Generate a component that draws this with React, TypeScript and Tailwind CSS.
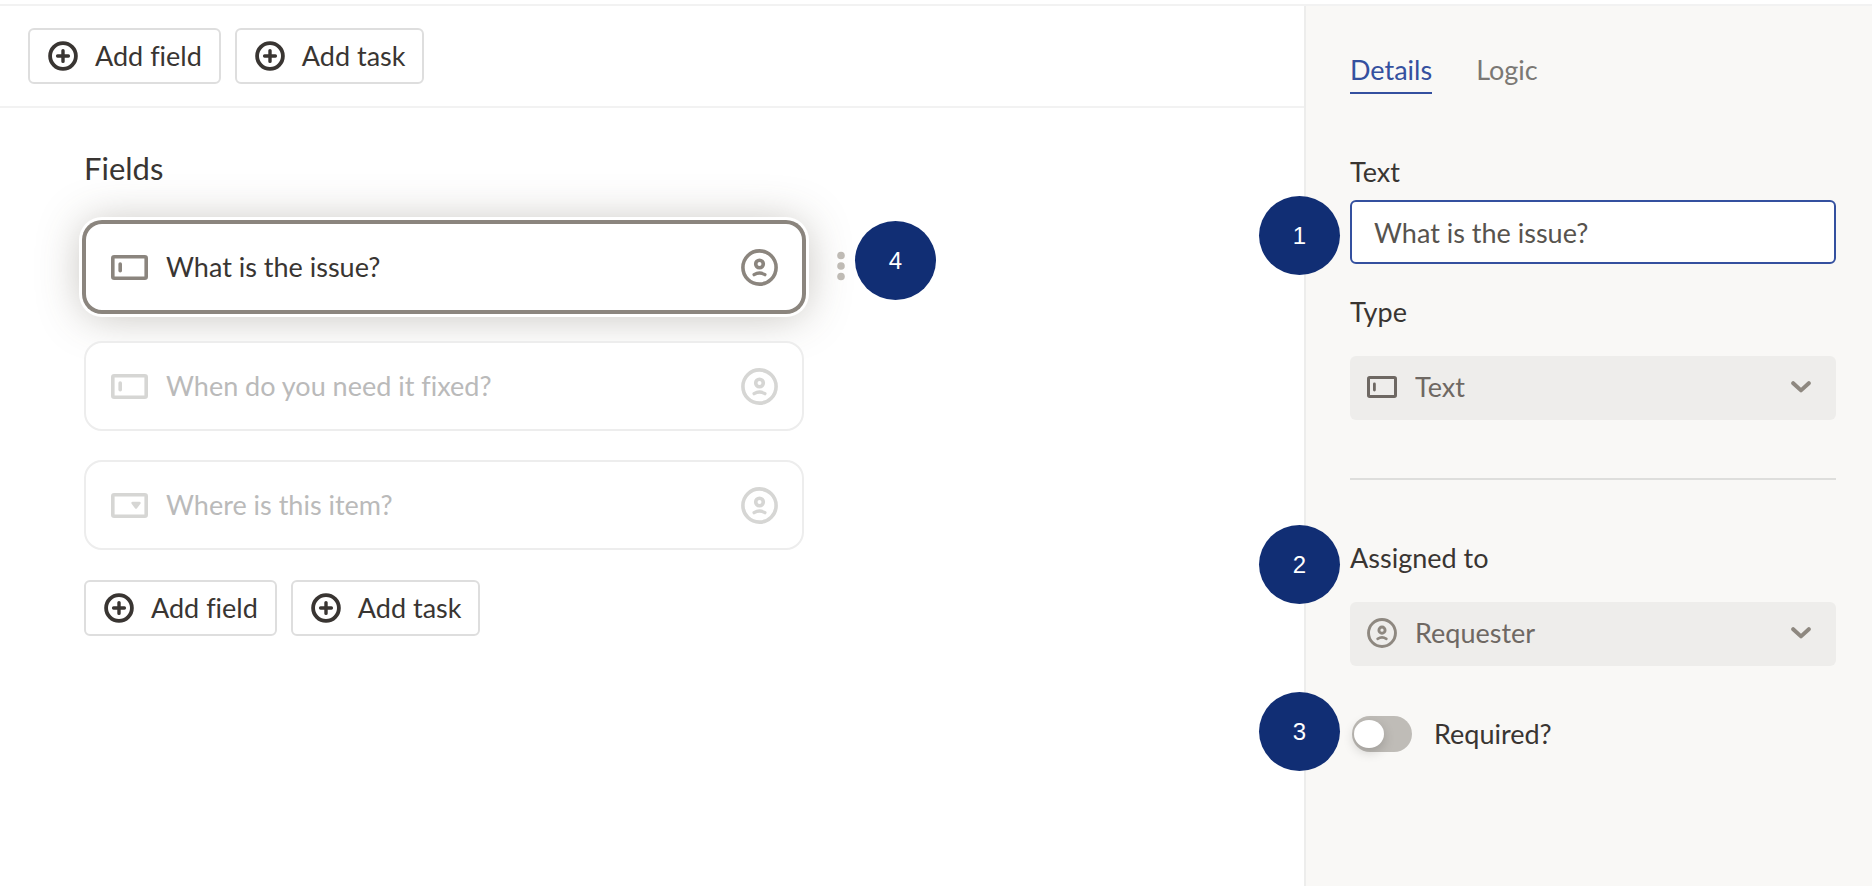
import { useState } from "react";
import type { ReactNode } from "react";

type IconProps = { className?: string };

function PlusCircleIcon({ className }: IconProps) {
  return (
    <svg viewBox="0 0 30 30" className={className} fill="none" stroke="currentColor" strokeLinecap="round" aria-hidden="true">
      <circle cx="15" cy="15" r="12.9" strokeWidth="3.8" />
      <path d="M15 9.6v10.8M9.6 15h10.8" strokeWidth="3.4" />
    </svg>
  );
}

function TextFieldIcon({ className }: IconProps) {
  return (
    <svg viewBox="0 0 37 25" className={className} fill="none" stroke="currentColor" aria-hidden="true">
      <rect x="1.8" y="1.8" width="33.4" height="21.4" rx="1.4" strokeWidth="3.6" />
      <path d="M9.2 9v6.8" strokeWidth="3.6" strokeLinecap="round" />
    </svg>
  );
}

function CompactTextFieldIcon({ className }: IconProps) {
  return (
    <svg viewBox="0 0 30 22" className={className} fill="none" stroke="currentColor" aria-hidden="true">
      <rect x="1.5" y="1.5" width="27" height="19" rx="1.2" strokeWidth="3" />
      <path d="M7.4 8v6" strokeWidth="2.8" strokeLinecap="round" />
    </svg>
  );
}

function DropdownFieldIcon({ className }: IconProps) {
  return (
    <svg viewBox="0 0 37 25" className={className} fill="none" stroke="currentColor" aria-hidden="true">
      <rect x="1.8" y="1.8" width="33.4" height="21.4" rx="1.4" strokeWidth="3.6" />
      <path d="M21.6 10h6.8L25 14.4z" fill="currentColor" strokeWidth="2.6" strokeLinejoin="round" />
    </svg>
  );
}

function PersonIcon({ className }: IconProps) {
  return (
    <svg viewBox="0 0 37 37" className={className} fill="none" stroke="currentColor" strokeLinecap="round" aria-hidden="true">
      <circle cx="18.5" cy="18.5" r="16.6" strokeWidth="3.6" />
      <circle cx="18.5" cy="15" r="3.8" strokeWidth="3.6" />
      <path d="M13.1 25.7Q18.5 22.3 23.9 25.7" strokeWidth="3.3" />
    </svg>
  );
}

function ChevronIcon({ className }: IconProps) {
  return (
    <svg viewBox="0 0 20 12" className={className} fill="none" stroke="currentColor" strokeLinecap="round" strokeLinejoin="round" aria-hidden="true">
      <path d="M2.2 2.2 10 9.4l7.8-7.2" strokeWidth="4" />
    </svg>
  );
}

function KebabIcon({ className }: IconProps) {
  return (
    <svg viewBox="0 0 8 30" className={className} fill="currentColor" aria-hidden="true">
      <circle cx="4" cy="4.5" r="3.8" />
      <circle cx="4" cy="15" r="3.8" />
      <circle cx="4" cy="25.5" r="3.8" />
    </svg>
  );
}

function AddButton({ label }: { label: string }) {
  return (
    <button
      type="button"
      className="flex h-14 items-center gap-[17px] rounded-md border-2 border-[#dedede] bg-white pr-[17px] pl-[18px] text-[#393532]"
    >
      <PlusCircleIcon className="size-[30px]" />
      {label}
    </button>
  );
}

function AddButtons() {
  return (
    <div className="flex gap-3.5">
      <AddButton label="Add field" />
      <AddButton label="Add task" />
    </div>
  );
}

function Badge({ n, className }: { n: number; className: string }) {
  return (
    <span
      className={`absolute flex h-[79px] w-[81px] items-center justify-center rounded-[50%] bg-[#112e74] font-['Liberation_Sans',sans-serif] text-2xl text-white ${className}`}
    >
      {n}
    </span>
  );
}

const fields = [
  { label: "What is the issue?", Icon: TextFieldIcon },
  { label: "When do you need it fixed?", Icon: TextFieldIcon },
  { label: "Where is this item?", Icon: DropdownFieldIcon },
];

function FieldCard({ label, Icon, active }: { label: string; Icon: (p: IconProps) => ReactNode; active: boolean }) {
  const look = active
    ? "border-[#8b857e] text-[#393532] shadow-[0_0_0_2px_#8b857e,0_0_0_5px_#fff,0_2px_44px_2px_rgba(80,70,55,0.34)]"
    : "border-[#ededed] text-[#bababa]";
  const iconColor = active ? "text-[#8b857e]" : "text-[#d6d6d4]";
  return (
    <li className={`relative rounded-[18px] border-2 bg-white ${look}`}>
      <button type="button" className="flex h-[86px] w-full items-center gap-[18px] pr-6 pl-[25px] text-left">
        <Icon className={`h-[25px] w-[37px] ${iconColor}`} />
        <span className="flex-1">{label}</span>
        <PersonIcon className={`size-[37px] ${iconColor}`} />
      </button>
      {active && (
        <div className="absolute top-0 left-full flex h-[84px] items-center pl-[35px] text-[#bfbbb5]">
          <button type="button" aria-label="Field options">
            <KebabIcon className="h-[30px] w-2" />
          </button>
          <Badge n={4} className="-top-[3px] left-[53px]" />
        </div>
      )}
    </li>
  );
}

function DisabledSelect({ id, value, icon }: { id: string; value: string; icon: ReactNode }) {
  return (
    <div className="grid h-16 items-center">
      <select
        id={id}
        disabled
        className="col-start-1 row-start-1 h-full w-full appearance-none rounded-md bg-[#eeedeb] pr-14 pb-0.5 pl-[65px] text-[#6e6863] opacity-100"
      >
        <option>{value}</option>
      </select>
      <span className="pointer-events-none col-start-1 row-start-1 flex items-center justify-between pr-[25px] pb-0.5 pl-[17px] text-[#8e8880]">
        {icon}
        <ChevronIcon className="h-3 w-5" />
      </span>
    </div>
  );
}

export default function App() {
  const [text, setText] = useState("What is the issue?");
  return (
    <div className="flex min-h-screen flex-col bg-white pt-1 font-[Lato,sans-serif] text-[27px] leading-8 text-[#393532] [font-variant-ligatures:none]">
      <div className="flex flex-1 border-t-2 border-[#f2f2f2]">
        <main className="min-w-0 flex-1">
          <div className="border-b-2 border-[#f2f2f2] px-7 py-[22px]">
            <AddButtons />
          </div>
          <section className="px-[84px] pt-[42px]">
            <h2 className="text-[31px] leading-9">Fields</h2>
            <ul className="mt-9 flex max-w-[720px] flex-col gap-[29px]">
              {fields.map((f, i) => (
                <FieldCard key={f.label} label={f.label} Icon={f.Icon} active={i === 0} />
              ))}
            </ul>
            <div className="mt-[30px]">
              <AddButtons />
            </div>
          </section>
        </main>

        <aside className="w-[568px] shrink-0 border-l-2 border-[#ededec] bg-[#f9f8f6] pt-12 pr-9 pl-11">
          <nav className="flex gap-11">
            <a href="#details" aria-current="page" className="border-b-2 border-[#34509f] pb-1.5 text-[#34509f]">
              Details
            </a>
            <a href="#logic" className="text-[#7b7874]">
              Logic
            </a>
          </nav>

          <div className="mt-[62px]">
            <label htmlFor="field-text" className="block">
              Text
            </label>
            <div className="relative mt-3">
              <input
                id="field-text"
                type="text"
                value={text}
                onChange={(e) => setText(e.target.value)}
                className="h-16 w-full rounded-md border-2 border-[#34509f] bg-white px-[22px] text-[#57534e] outline-none"
              />
              <Badge n={1} className="-top-1 -left-[91px]" />
            </div>
          </div>

          <div className="mt-8">
            <label htmlFor="field-type" className="mb-7 block">
              Type
            </label>
            <DisabledSelect
              id="field-type"
              value="Text"
              icon={<CompactTextFieldIcon className="h-[22px] w-[30px] text-[#6e6863]" />}
            />
          </div>

          <hr className="mt-[58px] border-t-2 border-[#dededc]" />

          <div className="relative mt-[62px]">
            <label htmlFor="field-assignee" className="mb-7 block">
              Assigned to
            </label>
            <DisabledSelect id="field-assignee" value="Requester" icon={<PersonIcon className="size-[30px]" />} />
            <Badge n={2} className="-top-[17px] -left-[91px]" />
          </div>

          <div className="relative mt-[50px] flex items-center gap-[22px] pl-0.5">
            <input
              id="field-required"
              type="checkbox"
              role="switch"
              className="h-9 w-[60px] appearance-none rounded-full bg-[#bfbcb7] px-0.5 py-1 before:block before:h-7 before:w-[30px] before:rounded-[50%] before:bg-white before:shadow-[0_4px_12px_rgba(0,0,0,0.18)] checked:bg-[#34509f] checked:before:ml-auto"
            />
            <label htmlFor="field-required">Required?</label>
            <Badge n={3} className="-top-6 -left-[91px]" />
          </div>
        </aside>
      </div>
    </div>
  );
}
